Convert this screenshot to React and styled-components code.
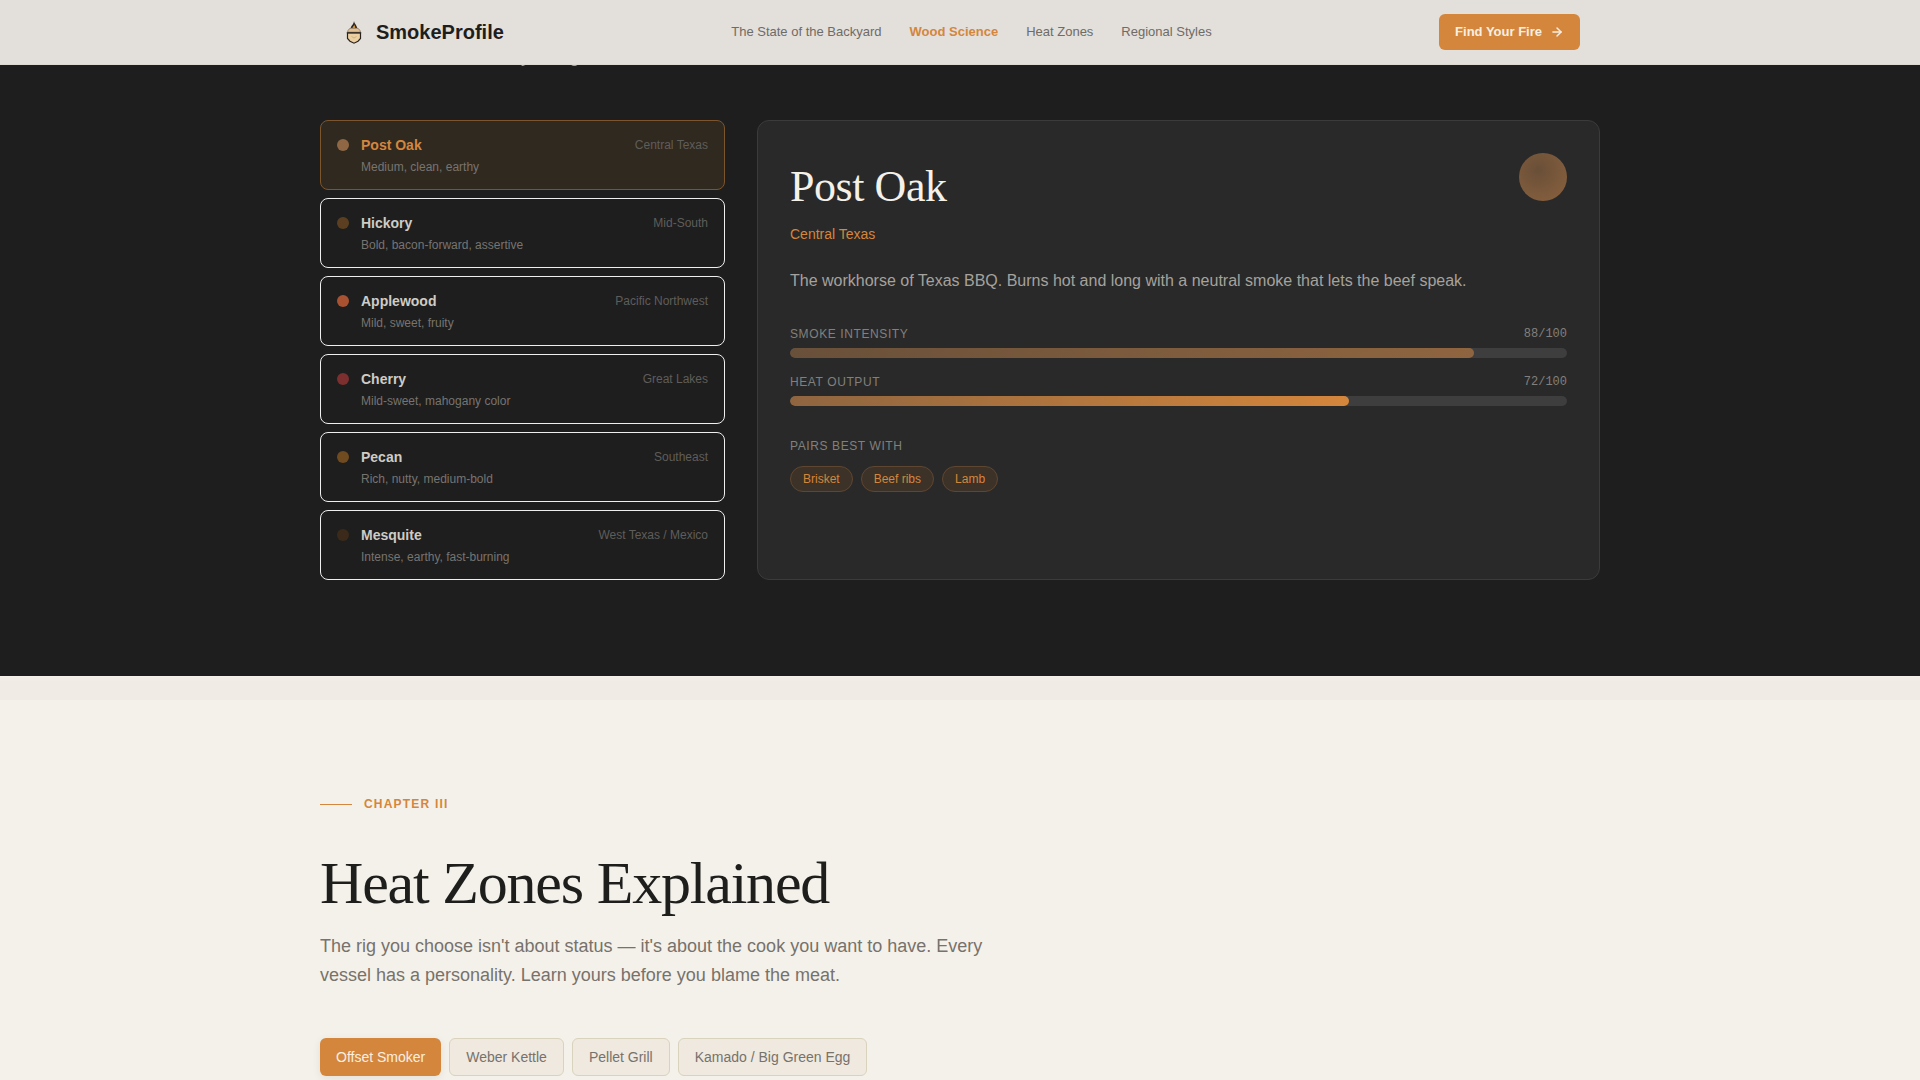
import React, { useState } from "react";
import styled, { createGlobalStyle } from "styled-components";
import { ArrowRight } from "lucide-react";

const GlobalStyle = createGlobalStyle`
  * {
    box-sizing: border-box;
  }
  html {
    overflow-x: hidden;
    scrollbar-width: none;
  }
  body {
    margin: 0;
    background: #f4f1ea;
    color: #1e1e1c;
    font-family: "Liberation Sans", Arial, sans-serif;
  }
  button {
    font-family: inherit;
    cursor: pointer;
  }
  h2, p, ul {
    margin: 0;
    padding: 0;
  }
`;

const Header = styled.header`
  position: fixed;
  top: 0;
  left: 0;
  right: 0;
  z-index: 10;
  background: #e3dfdb;
  border-bottom: 1px solid #dcd8d2;
`;

const HeaderInner = styled.div`
  max-width: 1280px;
  height: 64px;
  margin: 0 auto;
  padding: 0 20px;
  display: flex;
  align-items: center;
  justify-content: space-between;
`;

const Brand = styled.a`
  display: flex;
  align-items: center;
  gap: 8px;
  color: #1e1e1c;
  font-size: 20px;
  font-weight: 700;
  text-decoration: none;
`;

const Nav = styled.nav`
  display: flex;
  gap: 28px;
`;

const NavLink = styled.a`
  color: ${({ $active }) => ($active ? "#d4863c" : "#6f6b66")};
  font-size: 13px;
  line-height: 18px;
  font-weight: ${({ $active }) => ($active ? 700 : 400)};
  text-decoration: none;
`;

const FireButton = styled.button`
  display: flex;
  align-items: center;
  gap: 8px;
  height: 36px;
  padding: 0 16px;
  border: none;
  border-radius: 6px;
  background: #d4863c;
  color: #f8efe2;
  font-size: 13px;
  line-height: 18px;
  font-weight: 700;
`;

const WoodSection = styled.section`
  padding: 42px 0 96px;
  background: #1e1e1e;
`;

const Container = styled.div`
  width: 100%;
  max-width: 1280px;
  margin: 0 auto;
`;

const Lead = styled.p`
  max-width: 680px;
  color: ${({ $light }) => ($light ? "#a5a29d" : "#77726c")};
  font-size: 18px;
  line-height: 29px;
`;

const WoodGrid = styled.div`
  display: grid;
  grid-template-columns: 405px 1fr;
  gap: 32px;
  margin-top: 49px;
`;

const WoodList = styled.div`
  display: flex;
  flex-direction: column;
  gap: 8px;
`;

const WoodButton = styled.button`
  height: 70px;
  padding: 15px 16px;
  display: flex;
  flex-direction: column;
  gap: 6px;
  border: 1px solid ${({ $active }) => ($active ? "#7d552d" : "#efefef")};
  border-radius: 8px;
  background: ${({ $active }) => ($active ? "#302920" : "transparent")};
  text-align: left;
`;

const WoodTop = styled.span`
  display: flex;
  align-items: center;
  gap: 12px;
  width: 100%;
`;

const Dot = styled.span`
  width: 12px;
  height: 12px;
  border-radius: 50%;
  background: ${({ $color }) => $color};
`;

const WoodName = styled.span`
  flex: 1;
  color: ${({ $active }) => ($active ? "#d4863c" : "#cfcbc5")};
  font-size: 14px;
  line-height: 18px;
  font-weight: 700;
`;

const WoodRegion = styled.span`
  color: #5f5d5a;
  font-size: 12px;
`;

const WoodNotes = styled.span`
  padding-left: 24px;
  color: #777470;
  font-size: 12px;
  line-height: 14px;
`;

const Detail = styled.article`
  padding: 32px;
  border: 1px solid #3b3b3b;
  border-radius: 12px;
  background: #292929;
`;

const DetailHead = styled.div`
  display: flex;
  justify-content: space-between;
  align-items: flex-start;
`;

const DetailTitle = styled.h2`
  color: #f4f1ea;
  font-family: "Liberation Serif", "Times New Roman", serif;
  font-size: 44px;
  line-height: 68px;
  font-weight: 400;
  letter-spacing: -0.01em;
`;

const DetailRegion = styled.p`
  margin-top: 2px;
  color: #d4863c;
  font-size: 14px;
  line-height: 22px;
`;

const Swatch = styled.div`
  width: 48px;
  height: 48px;
  border-radius: 50%;
  background: radial-gradient(circle at 40% 35%, #694f38, #8b623e);
`;

const DetailText = styled.p`
  margin: 22px 0 30px;
  color: #a5a29d;
  font-size: 16px;
  line-height: 28px;
`;

const Meters = styled.div`
  display: flex;
  flex-direction: column;
  gap: 15px;
`;

const MeterHead = styled.div`
  display: flex;
  justify-content: space-between;
  margin-bottom: 5px;
  line-height: 18px;
`;

const Label = styled.span`
  color: #82807c;
  font-size: 12px;
  line-height: 18px;
  letter-spacing: 0.05em;
  text-transform: uppercase;
`;

const Score = styled.span`
  color: #82807c;
  font-family: "Liberation Mono", "Courier New", monospace;
  font-size: 12px;
`;

const Track = styled.div`
  height: 10px;
  border-radius: 5px;
  overflow: hidden;
  background: #3e3e3e;
`;

const Fill = styled.div`
  height: 100%;
  border-radius: 5px;
  background: linear-gradient(90deg, ${({ $from }) => $from}, ${({ $to }) => $to});
`;

const Pairings = styled.div`
  margin-top: 30px;
`;

const Tags = styled.ul`
  display: flex;
  gap: 8px;
  margin-top: 11px;
  list-style: none;
`;

const Tag = styled.li`
  padding: 0 12px;
  border: 1px solid #5f4630;
  border-radius: 13px;
  background: #3d3228;
  color: #d4863c;
  font-size: 12px;
  line-height: 24px;
`;

const Divider = styled.div`
  height: 24px;
  background: linear-gradient(#f4f1ea, #f0ebe4 25%);
`;

const HeatSection = styled.section`
  padding: 92px 0 96px;
`;

const Chapter = styled.p`
  display: flex;
  align-items: center;
  gap: 12px;
  color: #d4863c;
  font-size: 12px;
  line-height: 24px;
  font-weight: 700;
  letter-spacing: 0.1em;
  text-transform: uppercase;

  &::before {
    content: "";
    width: 32px;
    height: 1px;
    background: #d4863c;
  }
`;

const Heading = styled.h2`
  margin: 31px 0 13px;
  font-family: "Liberation Serif", "Times New Roman", serif;
  font-size: 60px;
  line-height: 72px;
  font-weight: 400;
  letter-spacing: -0.02em;
`;

const Tabs = styled.div`
  display: flex;
  flex-wrap: wrap;
  gap: 8px;
  margin-top: 48px;
`;

const Tab = styled.button`
  height: 38px;
  padding: 0 16px;
  border: ${({ $active }) => ($active ? "none" : "1px solid #d9d3bd")};
  border-radius: 6px;
  background: ${({ $active }) => ($active ? "#d4863c" : "#efe9df")};
  box-shadow: ${({ $active }) => ($active ? "0 2px 8px rgba(30, 30, 28, 0.08)" : "none")};
  color: ${({ $active }) => ($active ? "#f8efe2" : "#77726c")};
  font-size: 14px;
`;

const links = [
  "The State of the Backyard",
  "Wood Science",
  "Heat Zones",
  "Regional Styles",
];

const woods = [
  {
    name: "Post Oak",
    region: "Central Texas",
    notes: "Medium, clean, earthy",
    color: "#8f6744",
  },
  {
    name: "Hickory",
    region: "Mid-South",
    notes: "Bold, bacon-forward, assertive",
    color: "#5c3f20",
  },
  {
    name: "Applewood",
    region: "Pacific Northwest",
    notes: "Mild, sweet, fruity",
    color: "#a85232",
  },
  {
    name: "Cherry",
    region: "Great Lakes",
    notes: "Mild-sweet, mahogany color",
    color: "#7d2e2e",
  },
  {
    name: "Pecan",
    region: "Southeast",
    notes: "Rich, nutty, medium-bold",
    color: "#704b20",
  },
  {
    name: "Mesquite",
    region: "West Texas / Mexico",
    notes: "Intense, earthy, fast-burning",
    color: "#3b2a1a",
  },
];

const meters = [
  { label: "Smoke Intensity", value: 88, from: "#69503a", to: "#8f6540" },
  { label: "Heat Output", value: 72, from: "#8f6540", to: "#d4863c" },
];

const pairings = ["Brisket", "Beef ribs", "Lamb"];

const rigs = ["Offset Smoker", "Weber Kettle", "Pellet Grill", "Kamado / Big Green Egg"];

// Flame over a lidded kettle
const Logo = () => (
  <svg width="28" height="28" viewBox="0 0 28 28" fill="none" aria-hidden="true">
    <path d="M14 3c.3 2 1.2 2.600 1.800 3.800c.6 1.200 1.200 2.200 1.700 3.700h-7c.4-1.600.9-2.400 1.800-3.500c.8-1.100 1.500-2 1.700-4z" fill="#2a2520" />
    <path d="M14.200 6.500c.2 1.300 1.300 2 1 3.800h-2.600c-.2-1.600 1.300-2 1.600-3.800z" fill="#e09c34" />
    <path d="M7.600 14.200c0-2 1.600-4 4-4h4.800c2.400 0 4 2 4 4z" fill="#e2bf90" stroke="#7d6a55" strokeWidth=".7" />
    <path d="M7.500 15v5.500l2.500 2.700 4 2 4-2 2.500-2.700v-5.500z" fill="#ecd0a2" stroke="#28231e" strokeWidth="1.200" />
    <path d="M6.800 14.800h14.400" stroke="#28231e" strokeWidth="1" />
    <path d="M11.500 18.500l2.500 1.500 2.500-1.500" stroke="#c9a878" strokeWidth=".8" />
  </svg>
);

const App = () => {
  const [wood, setWood] = useState("Post Oak");
  const [rig, setRig] = useState("Offset Smoker");

  return (
    <>
      <GlobalStyle />
      <Header>
        <HeaderInner>
          <Brand href="#top">
            <Logo />
            SmokeProfile
          </Brand>
          <Nav>
            {links.map((link) => (
              <NavLink href="#" key={link} $active={link === "Wood Science"}>
                {link}
              </NavLink>
            ))}
          </Nav>
          <FireButton>
            Find Your Fire
            <ArrowRight size={14} strokeWidth={2.5} />
          </FireButton>
        </HeaderInner>
      </Header>

      <WoodSection>
        <Container>
          <Lead $light>what the smoke is actually doing to the meat.</Lead>
          <WoodGrid>
            <WoodList>
              {woods.map((item) => (
                <WoodButton
                  key={item.name}
                  $active={item.name === wood}
                  onClick={() => setWood(item.name)}
                >
                  <WoodTop>
                    <Dot $color={item.color} />
                    <WoodName $active={item.name === wood}>{item.name}</WoodName>
                    <WoodRegion>{item.region}</WoodRegion>
                  </WoodTop>
                  <WoodNotes>{item.notes}</WoodNotes>
                </WoodButton>
              ))}
            </WoodList>

            <Detail>
              <DetailHead>
                <div>
                  <DetailTitle>Post Oak</DetailTitle>
                  <DetailRegion>Central Texas</DetailRegion>
                </div>
                <Swatch />
              </DetailHead>
              <DetailText>
                The workhorse of Texas BBQ. Burns hot and long with a neutral smoke that lets the beef speak.
              </DetailText>
              <Meters>
                {meters.map((meter) => (
                  <div key={meter.label}>
                    <MeterHead>
                      <Label>{meter.label}</Label>
                      <Score>{meter.value}/100</Score>
                    </MeterHead>
                    <Track>
                      <Fill $from={meter.from} $to={meter.to} style={{ width: `${meter.value}%` }} />
                    </Track>
                  </div>
                ))}
              </Meters>
              <Pairings>
                <Label>Pairs best with</Label>
                <Tags>
                  {pairings.map((item) => (
                    <Tag key={item}>{item}</Tag>
                  ))}
                </Tags>
              </Pairings>
            </Detail>
          </WoodGrid>
        </Container>
      </WoodSection>

      <Divider />

      <HeatSection>
        <Container>
          <Chapter>Chapter III</Chapter>
          <Heading>Heat Zones Explained</Heading>
          <Lead>
            The rig you choose isn't about status — it's about the cook you want to have. Every vessel has a
            personality. Learn yours before you blame the meat.
          </Lead>
          <Tabs>
            {rigs.map((item) => (
              <Tab key={item} $active={item === rig} onClick={() => setRig(item)}>
                {item}
              </Tab>
            ))}
          </Tabs>
        </Container>
      </HeatSection>
    </>
  );
};

export default App;
